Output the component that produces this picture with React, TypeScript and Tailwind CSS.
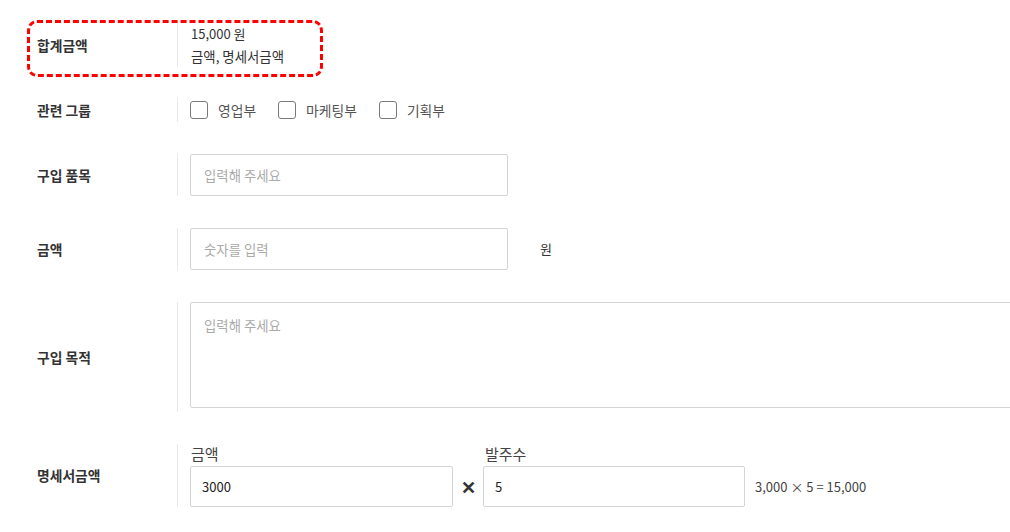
import React from "react";

const font = { fontFamily: '"Noto Sans CJK KR", "Noto Sans", sans-serif' };

function Row({ label, children, className = "" }: { label: string; children: React.ReactNode; className?: string }) {
  return (
    <div className={"flex items-stretch " + className}>
      <div className="w-[177px] shrink-0 pl-[37px] flex items-center text-[13.8px] font-bold text-[#333]">{label}</div>
      <div className="border-l border-[#e8e8e8] pl-[12px] flex items-center min-w-0">{children}</div>
    </div>
  );
}

function Check({ label }: { label: string }) {
  return (
    <label className="flex items-center mr-[22px]">
      <span className="w-[18px] h-[18px] border border-[#7a7a7a] rounded-[3px] bg-white" />
      <span className="ml-[10px] text-[13.8px] text-[#555]">{label}</span>
    </label>
  );
}

export default function App() {
  return (
    <div className="w-[1010px] h-[532px] overflow-hidden bg-white text-[#333]" style={font}>
      <div className="pt-[23px] flex flex-col gap-[32px]">
        <div className="relative">
          <Row label="합계금액" className="h-[44px]">
            <div className="pl-[1px] flex flex-col text-[13px] leading-[22px] text-[#333]">
              <span>15,000 원</span>
              <span className="text-[13.4px]">금액, 명세서금액</span>
            </div>
          </Row>
          <div className="absolute left-[27px] top-[-3px] w-[296px] h-[57px] border-[3px] border-dashed border-[#f00] rounded-[10px] pointer-events-none" />
        </div>

        <Row label="관련 그룹" className="h-[24px] -mt-[1px]">
          <div className="flex items-center">
            <Check label="영업부" />
            <Check label="마케팅부" />
            <Check label="기획부" />
          </div>
        </Row>

        <Row label="구입 품목" className="h-[42px]">
          <div className="w-[318px] h-[42px] border border-[#d4d4d4] rounded-[2px] flex items-center pl-[13px] text-[13.4px] text-[#aaa]">
            입력해 주세요
          </div>
        </Row>

        <Row label="금액" className="h-[42px]">
          <div className="w-[318px] h-[42px] border border-[#d4d4d4] rounded-[2px] flex items-center pl-[13px] text-[13.4px] text-[#aaa]">
            숫자를 입력
          </div>
          <span className="ml-[32px] text-[13px] text-[#333]">원</span>
        </Row>

        <Row label="구입 목적" className="h-[110px]">
          <div className="self-start shrink-0 w-[860px] h-[106px] border border-[#d4d4d4] rounded-[2px] pl-[13px] pt-[12px] text-[13.4px] text-[#aaa]">
            입력해 주세요
          </div>
        </Row>

        <Row label="명세서금액" className="h-[63px]">
          <div className="self-start flex items-end">
            <div className="flex flex-col">
              <span className="text-[15px] leading-[20px] text-[#444] pl-[1px]">금액</span>
              <div className="mt-[2px] w-[263px] h-[41px] border border-[#d4d4d4] rounded-[2px] flex items-center pl-[11px] text-[13px] text-[#222]">
                3000
              </div>
            </div>
            <div className="w-[30px] h-[41px] flex items-center justify-center text-[18px] font-bold text-[#333]">✕</div>
            <div className="flex flex-col">
              <span className="text-[15px] leading-[20px] text-[#444] pl-[2px]">발주수</span>
              <div className="mt-[2px] w-[262px] h-[41px] border border-[#d4d4d4] rounded-[2px] flex items-center pl-[11px] text-[13px] text-[#222]">
                5
              </div>
            </div>
            <div className="h-[41px] flex items-center ml-[10px] text-[13px] text-[#444]">3,000 × 5 = 15,000</div>
          </div>
        </Row>
      </div>
    </div>
  );
}
